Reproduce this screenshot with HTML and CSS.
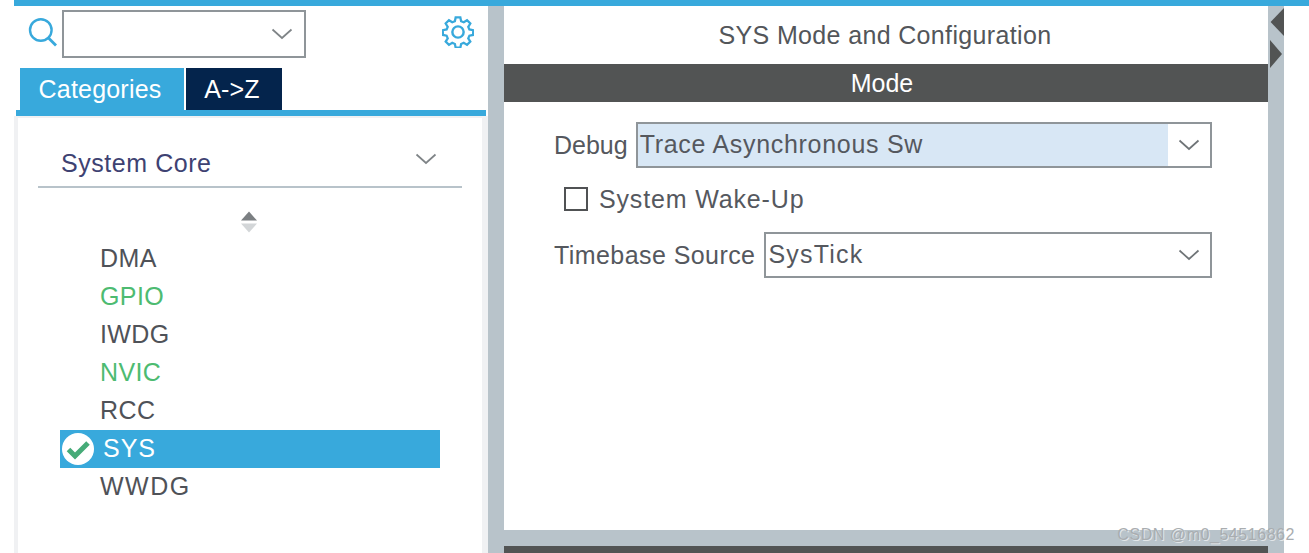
FILE: index.html
```html
<!DOCTYPE html>
<html lang="en">
<head>
<meta charset="utf-8">
<title>SYS Mode and Configuration</title>
<link rel="stylesheet" href="styles.css">
</head>
<body>
<div class="app">
  <aside class="left">
    <div class="search-row">
      <svg class="search-icon" width="30" height="30" viewBox="0 0 30 30"><circle cx="12.800" cy="11" r="10.800" fill="none" stroke="#38a9dc" stroke-width="2.400"/><path d="M20 18.500 L28 26.500" stroke="#38a9dc" stroke-width="2.800" fill="none"/></svg>
      <div class="search-box">
        <svg class="chev" width="22" height="12" viewBox="0 0 22 12"><path d="M1.500 1.500 L11 10 L20.500 1.500" fill="none" stroke="#7f8487" stroke-width="1.700"/></svg>
      </div>
      <svg class="gear" width="32" height="32" viewBox="0 0 34 34"><path d="M14.500 1.500h5l.8 4 2.800 1.200 3.500-2.200 3.500 3.500-2.200 3.500 1.200 2.800 4 .8v5l-4 .8-1.200 2.800 2.200 3.500-3.500 3.500-3.500-2.200-2.800 1.200-.8 4h-5l-.8-4-2.800-1.200-3.500 2.200-3.500-3.500 2.200-3.500-1.200-2.800-4-.8v-5l4-.8 1.200-2.800-2.200-3.500 3.500-3.500 3.500 2.200 2.800-1.200z" fill="none" stroke="#38a9dc" stroke-width="2.400"/><circle cx="17" cy="17" r="6" fill="none" stroke="#38a9dc" stroke-width="2.600"/></svg>
    </div>
    <div class="tabs">
      <div class="tab tab-active">Categories</div>
      <div class="tab tab-dark">A-&gt;Z</div>
    </div>
    <div class="tab-line"></div>
    <div class="panel">
      <div class="group-head">
        <span>System Core</span>
        <svg class="chev" width="22" height="12" viewBox="0 0 22 12"><path d="M1.500 1.500 L11 10 L20.500 1.500" fill="none" stroke="#7f8487" stroke-width="1.700"/></svg>
      </div>
      <svg class="sort" width="18" height="22" viewBox="0 0 18 22"><path d="M9 0.500 L17 9.500 H1 Z" fill="#7b7f82"/><path d="M1 12.500 H17 L9 21.500 Z" fill="#d3d6d8"/></svg>
      <ul class="list">
        <li class="item">DMA</li>
        <li class="item ok">GPIO</li>
        <li class="item">IWDG</li>
        <li class="item ok">NVIC</li>
        <li class="item">RCC</li>
        <li class="item selected">
          <svg class="check" width="32" height="32" viewBox="0 0 32 32"><circle cx="16" cy="16" r="16" fill="#fff"/><path d="M6.500 16.500 L13 23 L26 10" fill="none" stroke="#46ab78" stroke-width="5"/></svg>
          <span class="selected-text">SYS</span>
        </li>
        <li class="item wide">WWDG</li>
      </ul>
    </div>
  </aside>
  <main class="right">
    <div class="title">SYS Mode and Configuration</div>
    <div class="band">Mode</div>
    <div class="form">
      <div class="row row-debug">
        <span class="label-debug">Debug</span>
        <div class="select select-debug"><span class="val val-debug">Trace Asynchronous Sw</span><span class="arrow"><svg width="22" height="12" viewBox="0 0 22 12"><path d="M1.500 1.500 L11 10 L20.500 1.500" fill="none" stroke="#6f7477" stroke-width="1.700"/></svg></span></div>
      </div>
      <div class="row row-check"><span class="box"></span><span class="label-check">System Wake-Up</span></div>
      <div class="row row-time">
        <span class="label-time">Timebase Source</span>
        <div class="select select-time"><span class="val val-time">SysTick</span><span class="arrow"><svg width="22" height="12" viewBox="0 0 22 12"><path d="M1.500 1.500 L11 10 L20.500 1.500" fill="none" stroke="#6f7477" stroke-width="1.700"/></svg></span></div>
      </div>
    </div>
    <div class="foot"><div class="foot-bar"></div></div>
  </main>
  <div class="splitter">
    <svg class="collapse" width="16" height="70" viewBox="0 0 16 70"><path d="M16 2 L2.600 16 L16 30 Z" fill="#525454"/><path d="M2 34 L14 48 L2 62 Z" fill="#525454"/></svg>
  </div>
  <div class="margin"></div>
</div>
<div class="mark">CSDN @m0_54516862</div>
</body>
</html>
```
FILE: styles.css
```css
* { box-sizing: border-box; }
html, body { margin: 0; height: 553px; overflow: hidden; background: #fff; }
body {
  position: relative;
  padding-left: 14px;
  font-family: "Liberation Sans", Arial, sans-serif;
  font-size: 25px;
  color: #4d5063;
}
.app {
  display: grid;
  grid-template-columns: 474px 780px 16px 1fr;
  height: 553px;
  border-top: 6px solid #38a9dc;
}
.left { display: flex; flex-direction: column; height: 547px; border-right: 16px solid #b8c3ca; width: 490px; }
.right { display: flex; flex-direction: column; height: 547px; margin-left: 16px; width: 764px; }
.search-row { display: flex; align-items: center; height: 56px; padding: 0 0 0 14px; flex: none; }
.search-icon { margin-right: 4px; flex: none; overflow: visible; }
.search-box {
  width: 244px; height: 48px;
  border: 2px solid #8f9599;
  display: flex; align-items: center; justify-content: flex-end;
  padding-right: 11px;
}
.gear { margin-left: auto; margin-right: 14px; flex: none; align-self: flex-start; margin-top: 10px; }
.tabs { display: flex; padding: 6px 0 0 6px; gap: 2px; height: 48px; flex: none; }
.tab { height: 42px; color: #fff; letter-spacing: 0.2px; padding: 7px 0 0; text-align: center; }
.tab-active { width: 164px; background: #38a9dc; padding-right: 4px; }
.tab-dark { width: 96px; background: #04244c; padding-right: 4px; }
.tab-line { height: 6px; margin: 0 0 0 2px; width: 470px; background: #38a9dc; flex: none; }
.panel {
  flex: 1;
  border-left: 4px solid #f0f1f3;
  border-right: 6px solid #f0f1f3;
  padding: 0 0 0 20px;
}
.panel::before { content: ""; display: block; height: 2px; margin: 0 -6px 0 -24px; background: #f0f1f3; }
.group-head {
  width: 424px;
  height: 70px;
  display: flex;
  justify-content: space-between;
  align-items: flex-start;
  border-bottom: 2px solid #b8c3ca;
  padding: 31px 25px 0 23px;
  color: #3e4272;
  letter-spacing: 0.55px;
}
.group-head .chev { margin-top: 4px; }
.sort { display: block; margin: 23px 0 0 202px; }
.list { list-style: none; margin: 7px 0 0; padding: 0; }
.item { height: 38px; line-height: 36px; padding-left: 40px; width: 380px; margin-left: 22px; color: #4f5258; letter-spacing: 0.4px; }
.ok { color: #4dbb71; }
.wide { letter-spacing: 1.5px; }
.selected { background: #38a9dc; color: #fff; display: flex; align-items: center; padding-left: 2px; gap: 9px; letter-spacing: 1px; }
.selected-text { margin-top: -2px; }
.check { flex: none; }
.title { height: 58px; text-align: center; line-height: 58px; letter-spacing: 0.35px; color: #53565a; padding-right: 2px; }
.band { height: 38px; background: #525454; color: #fff; text-align: center; line-height: 38px; padding-right: 8px; }
.form { flex: 1; padding: 20px 0 0 50px; color: #55585e; }
.row { display: flex; align-items: center; }
.row-debug { gap: 8px; }
.label-debug { letter-spacing: 0; }
.row-check { height: 36px; margin: 13px 0 15px; padding-left: 10px; gap: 11px; }
.label-check { letter-spacing: 0.85px; }
.row-time { gap: 9px; }
.label-time { letter-spacing: 0.43px; }
.select { display: flex; height: 46px; border: 2px solid #8f9599; }
.select-debug { width: 576px; }
.val-debug { background: #d8e7f5; width: 530px; letter-spacing: 0.7px; }
.select-time { width: 448px; }
.val { flex: 1; padding-left: 2px; line-height: 40px; white-space: nowrap; }
.val-time { letter-spacing: 1.2px; }
.arrow { width: 42px; display: flex; align-items: center; justify-content: center; flex: none; }
.box { width: 24px; height: 24px; border: 2px solid #505254; }
.foot { height: 23px; background: #b8c3ca; padding-top: 16px; flex: none; }
.foot-bar { height: 7px; background: #525454; }
.splitter { background: #b8c3ca; grid-column: 3; height: 547px; }
.collapse { display: block; }
.margin { background: #fff; }
.mark { position: absolute; right: 14px; top: 526px; font-size: 16px; letter-spacing: 0.55px; color: #a9adb0; text-shadow: 1px 1px 0 rgba(255,255,255,.6); }
```
